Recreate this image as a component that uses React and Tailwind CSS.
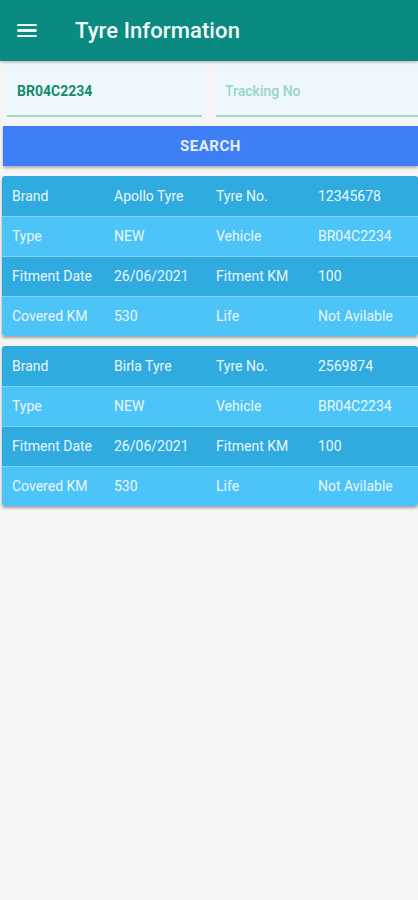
import React from "react";

const cards = [
  [
    ["Brand", "Apollo Tyre", "Tyre No.", "12345678"],
    ["Type", "NEW", "Vehicle", "BR04C2234"],
    ["Fitment Date", "26/06/2021", "Fitment KM", "100"],
    ["Covered KM", "530", "Life", "Not Avilable"],
  ],
  [
    ["Brand", "Birla Tyre", "Tyre No.", "2569874"],
    ["Type", "NEW", "Vehicle", "BR04C2234"],
    ["Fitment Date", "26/06/2021", "Fitment KM", "100"],
    ["Covered KM", "530", "Life", "Not Avilable"],
  ],
];

export default function App() {
  return (
    <div className="w-[418px] h-[900px] bg-[#f5f5f5] overflow-hidden" style={{ fontFamily: "Roboto, 'Noto Sans', sans-serif" }}>
      <div className="h-[61px] bg-[#0a8a80] flex items-center shadow-[0_1px_3px_rgba(0,0,0,0.3)] relative z-10">
        <div className="ml-[17px] w-[20px] flex flex-col gap-[3px]">
          <div className="h-[2.5px] bg-[#e8f6f4] rounded-sm" />
          <div className="h-[2.5px] bg-[#e8f6f4] rounded-sm" />
          <div className="h-[2.5px] bg-[#e8f6f4] rounded-sm" />
        </div>
        <div className="ml-[38px] text-[22px] font-medium text-[#f2fbfa] tracking-[0.1px]">Tyre Information</div>
      </div>
      <div className="flex gap-[11px] pl-[4px] pt-[2px]">
        <div className="w-[201px] h-[56px] bg-[#eef8fc] flex flex-col justify-end">
          <div className="flex-1 flex items-center pl-[13px] pt-[4px] text-[14px] font-bold text-[#17896c]">BR04C2234</div>
          <div className="h-[2px] mx-[3px] mb-[2px] bg-[#a9d3cc]" />
        </div>
        <div className="flex-1 h-[56px] bg-[#eef8fc] flex flex-col justify-end">
          <div className="flex-1 flex items-center pl-[9px] pt-[4px] text-[14px] font-medium text-[#97d4c8]">Tracking No</div>
          <div className="h-[2px] mb-[2px] bg-[#a9d3cc]" />
        </div>
      </div>
      <div className="mt-[7px] ml-[3px] h-[40px] bg-[#3f7ff6] flex items-center justify-center text-[15px] font-bold tracking-[0.5px] text-[#e6eefc] shadow-[0_2px_3px_rgba(0,0,0,0.3)]">
        SEARCH
      </div>
      <div className="flex flex-col gap-[10px] mt-[10px] ml-[2px]">
        {cards.map((rows, ci) => (
          <div key={ci} className="rounded-[3px] overflow-hidden shadow-[0_2px_3px_rgba(0,0,0,0.35)]">
            {rows.map((r, ri) => (
              <div
                key={ri}
                className={`h-[40px] grid grid-cols-[102px_102px_102px_1fr] items-center text-[14px] text-[#eaf7fd] ${
                  ri % 2 === 0 ? "bg-[#2fabe0]" : "bg-[#4dc4f8]"
                } ${ri > 0 ? "border-t border-[#7fd3f5]" : ""}`}
              >
                {r.map((c, k) => (
                  <div key={k} className="pl-[10px] whitespace-nowrap">{c}</div>
                ))}
              </div>
            ))}
          </div>
        ))}
      </div>
    </div>
  );
}
